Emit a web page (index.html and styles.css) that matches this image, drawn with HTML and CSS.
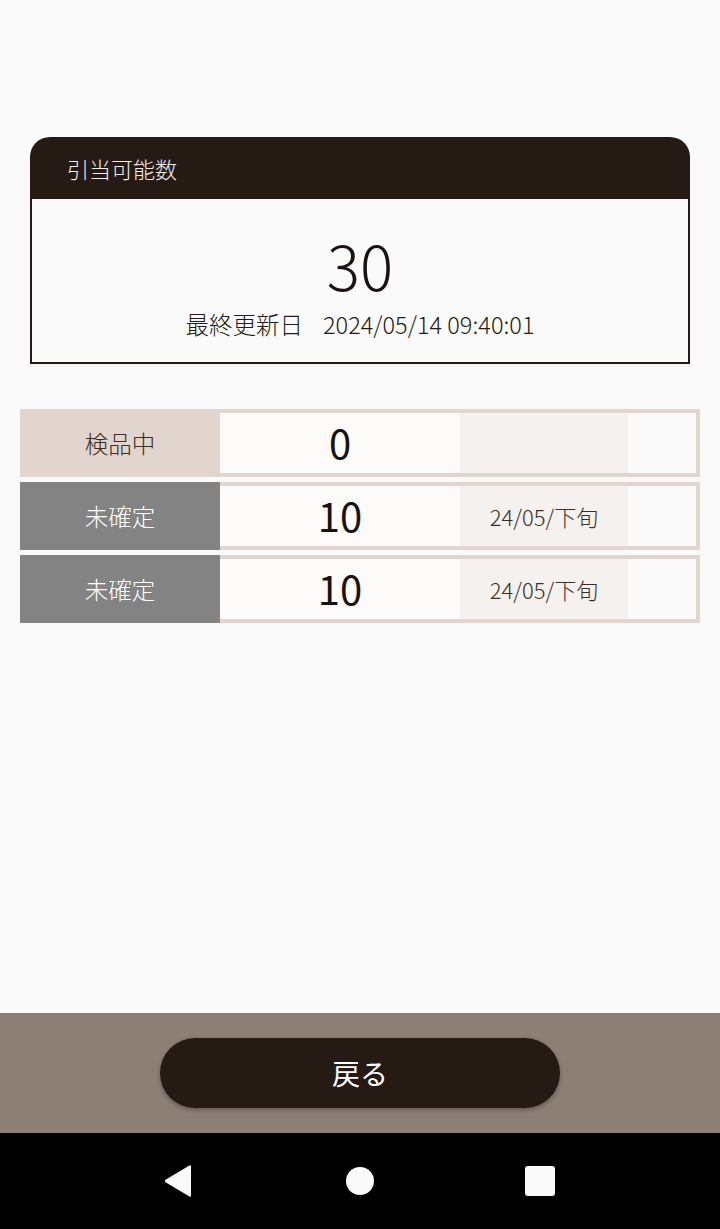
FILE: index.html
```html
<!DOCTYPE html>
<html lang="ja">
<head>
<meta charset="utf-8">
<link rel="stylesheet" href="styles.css">
</head>
<body>
<div class="screen">
  <main class="content">
    <section class="card">
      <div class="card-head">引当可能数</div>
      <div class="card-body">
        <div class="big-num">30</div>
        <div class="updated"><span>最終更新日</span><span>2024/05/14 09:40:01</span></div>
      </div>
    </section>
    <div class="rows">
      <div class="row">
        <div class="label label-beige">検品中</div>
        <div class="cells">
          <div class="qty">0</div>
          <div class="date"></div>
          <div class="extra"></div>
        </div>
      </div>
      <div class="row">
        <div class="label label-gray">未確定</div>
        <div class="cells">
          <div class="qty">10</div>
          <div class="date">24/05/下旬</div>
          <div class="extra"></div>
        </div>
      </div>
      <div class="row">
        <div class="label label-gray">未確定</div>
        <div class="cells">
          <div class="qty">10</div>
          <div class="date">24/05/下旬</div>
          <div class="extra"></div>
        </div>
      </div>
    </div>
  </main>
  <footer class="footer">
    <button class="back-btn">戻る</button>
  </footer>
  <nav class="navbar">
    <svg class="nav-icon nav-back" width="30" height="34" viewBox="0 0 30 34"><path d="M28 2.5 L28 31.5 Q28 33.5 26 32.3 L2.5 18.3 Q1 17 2.5 15.7 L26 1.7 Q28 0.5 28 2.5 Z" fill="#fafafa"/></svg>
    <svg class="nav-icon nav-home" width="28" height="28" viewBox="0 0 28 28"><circle cx="14" cy="14" r="14" fill="#fafafa"/></svg>
    <svg class="nav-icon nav-recent" width="30" height="30" viewBox="0 0 30 30"><rect x="0" y="0" width="30" height="30" rx="3" fill="#fafafa"/></svg>
  </nav>
</div>
</body>
</html>
```

FILE: styles.css
```css
* { box-sizing: border-box; }
html, body { margin: 0; padding: 0; }
body {
  background: #fafafa;
  font-family: "Noto Sans CJK JP", "Noto Sans", sans-serif;
  color: #261a15;
}
.screen {
  width: 720px;
  height: 1229px;
  display: flex;
  flex-direction: column;
}
.content {
  flex: 1;
  padding: 137px 20px 0;
}
.card {
  margin: 0 10px;
  border-radius: 20px 20px 0 0;
  overflow: hidden;
}
.card-head {
  background: #261a15;
  color: #f2eeeb;
  height: 62px;
  padding-left: 37px;
  font-size: 22px;
  line-height: 62px;
  font-weight: 300;
}
.card-body {
  border: 2px solid #261a15;
  border-top: none;
  height: 165px;
  display: flex;
  flex-direction: column;
  align-items: center;
  padding-top: 29px;
  background: #fafafa;
}
.big-num {
  font-size: 62px;
  font-weight: 300;
  line-height: 72px;
  color: #1a1210;
}
.updated {
  font-size: 23.5px;
  line-height: 30px;
  margin-top: 9px;
  font-weight: 300;
  color: #261a15;
  display: flex;
  gap: 20px;
}
.rows {
  margin-top: 45px;
  display: flex;
  flex-direction: column;
  gap: 5px;
}
.row {
  display: flex;
  height: 68px;
}
.label {
  width: 200px;
  display: flex;
  align-items: center;
  justify-content: center;
  font-size: 23.5px;
  font-weight: 300;
}
.label-beige { background: #e2d5cd; color: #3a2e28; }
.label-gray { background: #838383; color: #ffffff; }
.cells {
  flex: 1;
  display: flex;
  border: 4px solid #e2d5cd;
  border-left: none;
}
.qty {
  width: 240px;
  background: #fcfbfa;
  display: flex;
  align-items: center;
  justify-content: center;
  font-size: 40px;
  font-weight: 400;
  color: #1a1210;
  padding-bottom: 3px;
}
.date {
  width: 168px;
  background: #f5f1ee;
  display: flex;
  align-items: center;
  justify-content: center;
  font-size: 22px;
  font-weight: 300;
  color: #3a2e28;
}
.extra {
  flex: 1;
  background: #fafafa;
}
.footer {
  height: 120px;
  background: #8c7f74;
  display: flex;
  justify-content: center;
  padding-top: 25px;
}
.back-btn {
  width: 400px;
  height: 70px;
  border: none;
  border-radius: 35px;
  background: #261a15;
  color: #ffffff;
  font-family: "Noto Sans CJK JP", "Noto Sans", sans-serif;
  font-size: 28px;
  font-weight: 400;
  box-shadow: 0 2px 4px rgba(0,0,0,0.3);
}
.navbar {
  height: 96px;
  background: #000;
  display: flex;
  align-items: center;
  justify-content: center;
}
.nav-back { margin-right: 153px; margin-left: -2px; }
.nav-home { margin-right: 152px; }
.nav-recent { margin-left: -1px; }
```
